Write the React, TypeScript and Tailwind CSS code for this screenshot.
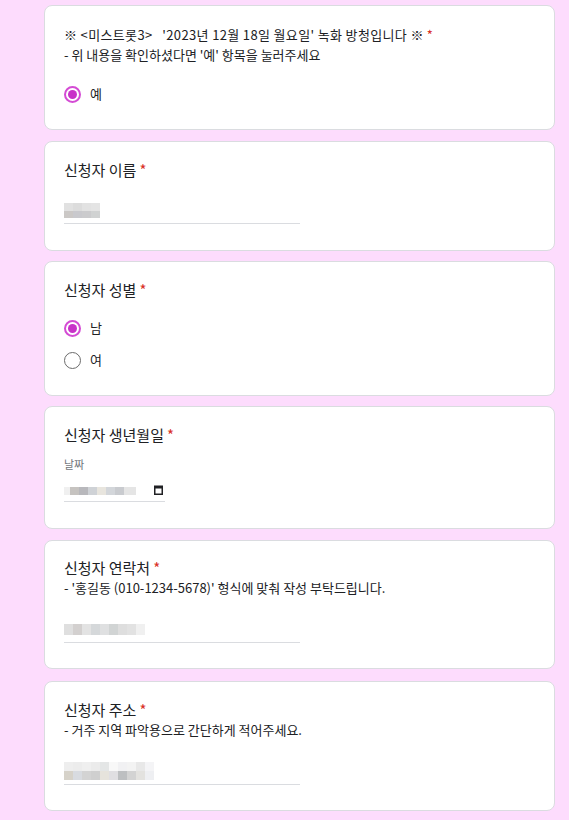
import React from "react";

const font = { fontFamily: '"Noto Sans CJK KR", "Noto Sans", sans-serif' };

function Star() {
  return <span className="text-[#d93025] ml-[3px]">*</span>;
}

function Radio({ checked, label }: { checked: boolean; label: string }) {
  return (
    <div className="flex items-center h-[20px]">
      {checked ? (
        <div className="w-[17px] h-[17px] rounded-full border-2 border-[#d44bd4] flex items-center justify-center">
          <div className="w-[9px] h-[9px] rounded-full bg-[#c832c8]" />
        </div>
      ) : (
        <div className="w-[17px] h-[17px] rounded-full border-[1.5px] border-[#6b6b6b]" />
      )}
      <span className="ml-[9px] text-[13px] text-[#202124]">{label}</span>
    </div>
  );
}

function Blur({ colors, rows }: { colors: string[][]; rows: number[] }) {
  return (
    <div className="flex flex-col">
      {colors.map((row, i) => (
        <div key={i} className="flex">
          {row.map((c, j) => (
            <div key={j} className="w-[9px]" style={{ height: rows[i], background: c }} />
          ))}
        </div>
      ))}
    </div>
  );
}

function Card({ children, className }: { children: React.ReactNode; className?: string }) {
  return (
    <div className={"bg-white border border-[#dadce0] rounded-[8px] pl-[19px] pr-[19px] " + (className ?? "")}>
      {children}
    </div>
  );
}

export default function App() {
  return (
    <div className="min-h-[820px] bg-[#fddcfd] pt-[5px] pb-[10px]" style={font}>
      <div className="ml-[44px] w-[511px] flex flex-col">
        {/* Card 1 */}
        <Card className="h-[125px] pt-[19px]">
          <div className="text-[13px] leading-[20px] text-[#202124] tracking-[0.35px]">
            ※ &lt;미스트롯3&gt;&nbsp;&nbsp; '2023년 12월 18일 월요일' 녹화 방청입니다 ※<Star />
          </div>
          <div className="text-[13px] leading-[20px] text-[#202124]">- 위 내용을 확인하셨다면 '예' 항목을 눌러주세요</div>
          <div className="mt-[19px]">
            <Radio checked label="예" />
          </div>
        </Card>

        {/* Card 2 */}
        <Card className="mt-[11px] h-[110px] pt-[18px]">
          <div className="text-[15px] leading-[20px] text-[#202124]">
            신청자 이름<Star />
          </div>
          <div className="w-[236px] h-[44px] border-b border-[#dadce0] flex items-end pb-[5px]">
            <Blur
              rows={[8, 7]}
              colors={[
                ["#e1e1e1", "#dcdcdc", "#e2e2e2", "#e4e4e4"],
                ["#cbc8c6", "#c9c9cd", "#cbcbcd", "#d0d2d2"],
              ]}
            />
          </div>
        </Card>

        {/* Card 3 */}
        <Card className="mt-[10px] h-[135px] pt-[18px]">
          <div className="text-[15px] leading-[20px] text-[#202124]">
            신청자 성별<Star />
          </div>
          <div className="mt-[18px] flex flex-col gap-[12px]">
            <Radio checked label="남" />
            <Radio checked={false} label="여" />
          </div>
        </Card>

        {/* Card 4 */}
        <Card className="mt-[10px] h-[123px] pt-[18px]">
          <div className="text-[15px] leading-[20px] text-[#202124]">
            신청자 생년월일<Star />
          </div>
          <div className="mt-[11px] text-[11px] leading-[16px] text-[#70757a]">날짜</div>
          <div className="w-[101px] h-[30px] border-b border-[#dadce0] flex items-end justify-between pb-[6px]">
            <div className="flex h-[8px]">
              <div className="w-[6px] bg-[#f0f0f0]" />
              <div className="w-[9px] bg-[#c6c3c0]" />
              <div className="w-[9px] bg-[#b8b8bc]" />
              <div className="w-[9px] bg-[#cfd2d6]" />
              <div className="w-[9px] bg-[#e8e5de]" />
              <div className="w-[9px] bg-[#d3d6da]" />
              <div className="w-[9px] bg-[#c9cbcf]" />
              <div className="w-[12px] bg-[#e5e5e5]" />
            </div>
            <svg width="9" height="10" viewBox="0 0 9 10" className="mr-[2px]">
              <rect x="0.75" y="1.25" width="7.5" height="8" fill="none" stroke="#202124" strokeWidth="1.5" />
              <rect x="0" y="1" width="9" height="2.5" fill="#202124" />
            </svg>
          </div>
        </Card>

        {/* Card 5 */}
        <Card className="mt-[11px] h-[129px] pt-[16px]">
          <div className="text-[15px] leading-[21px] text-[#202124]">
            신청자 연락처<Star />
          </div>
          <div className="text-[13px] leading-[20px] text-[#202124]">- '홍길동 (010-1234-5678)' 형식에 맞춰 작성 부탁드립니다.</div>
          <div className="w-[236px] h-[45px] border-b border-[#dadce0] flex items-end pb-[7px]">
            <Blur
              rows={[11]}
              colors={[["#dfdfdf", "#d3d0cf", "#e3e3e3", "#d5d8da", "#dfe0e1", "#d1d4d4", "#dedede", "#e2e2e2", "#f0f0f0"]]}
            />
          </div>
        </Card>

        {/* Card 6 */}
        <Card className="mt-[12px] h-[130px] pt-[17px]">
          <div className="text-[15px] leading-[21px] text-[#202124]">
            신청자 주소<Star />
          </div>
          <div className="text-[13px] leading-[20px] text-[#202124]">- 거주 지역 파악용으로 간단하게 적어주세요.</div>
          <div className="w-[236px] h-[45px] border-b border-[#dadce0] flex items-end pb-[4px]">
            <Blur
              rows={[9, 9]}
              colors={[
                ["#eeeeee", "#ececec", "#efefef", "#ebebeb", "#e4e6e6", "#f8f8f8", "#f1f1f3", "#f3f3f3", "#e8e8e8", "#f4f4f6"],
                ["#d6d2c9", "#d8dbe0", "#d3d3d3", "#cfcfcf", "#e6e3dc", "#e0dfe2", "#bdbfc1", "#d3d3d3", "#e3e2df", "#eeeff2"],
              ]}
            />
          </div>
        </Card>
      </div>
    </div>
  );
}
